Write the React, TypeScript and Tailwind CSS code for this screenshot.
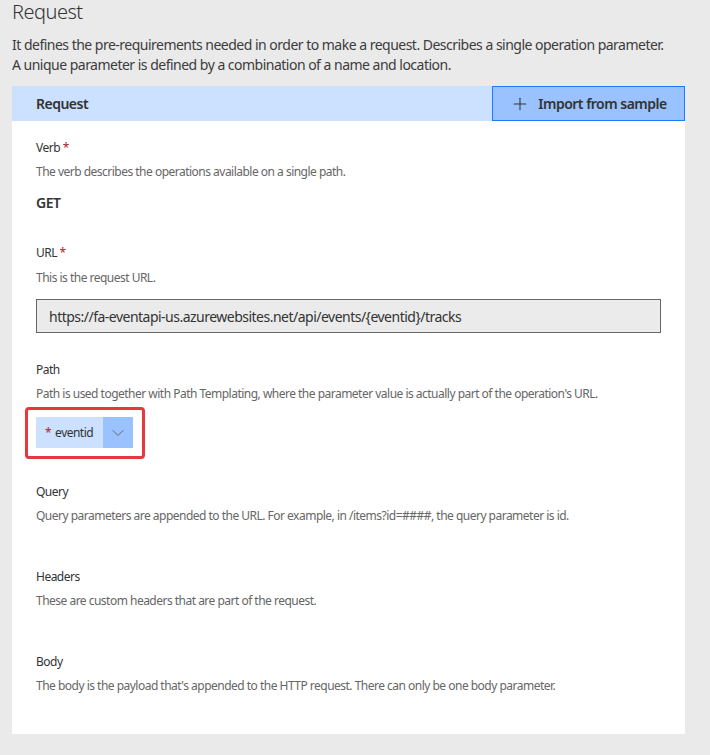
import { Plus, ChevronDown } from "lucide-react";

/**
 * Request definition panel: verb, url, path params, query, headers, body
 */
export default function App() {
  // Sections that only carry a label and a description
  const emptySections = [
    {
      label: "Query",
      description:
        "Query parameters are appended to the URL. For example, in /items?id=####, the query parameter is id.",
    },
    {
      label: "Headers",
      description: "These are custom headers that are part of the request.",
    },
    {
      label: "Body",
      description:
        "The body is the payload that's appended to the HTTP request. There can only be one body parameter.",
    },
  ];

  return (
    <div className="min-h-[755px] bg-[#eaeaea] px-3 pt-[2px] font-['Segoe_UI','Noto_Sans',sans-serif] tracking-[-0.032em] text-[#333333]">
      {/* Title */}
      <h1 className="text-[20px] font-light leading-[20px] text-[#333333]">Request</h1>
      <p className="mt-[13px] text-[14px] leading-[20px] text-[#3c3c3c]">
        It defines the pre-requirements needed in order to make a request. Describes a single operation parameter.
        <br />
        A unique parameter is defined by a combination of a name and location.
      </p>

      {/* Panel */}
      <div className="mt-[11px] w-[673px] bg-white pb-[39px]">
        <div className="flex h-[35px] items-stretch bg-[#cce0ff]">
          <div className="flex flex-1 items-center pl-6 text-[14px] font-semibold">Request</div>
          <button className="flex w-[193px] items-center justify-center gap-2 border border-[#1a7bff] bg-[#99c2ff] text-[14px] font-semibold text-[#333333]">
            <Plus className="h-5 w-5 text-[#333333]" strokeWidth={1.25} />
            Import from sample
          </button>
        </div>

        <div className="pl-6 pr-6 text-[12px]">
          {/* Verb */}
          <div className="pt-[18px]">
            <div className="leading-[18px]">
              Verb <span className="text-[#a4262c]">*</span>
            </div>
            <div className="mt-[6px] leading-[18px] text-[#666666]">
              The verb describes the operations available on a single path.
            </div>
            <div className="mt-[12px] text-[14px] font-semibold leading-[20px]">GET</div>
          </div>

          {/* URL */}
          <div className="pt-[31px]">
            <div className="leading-[18px]">
              URL <span className="text-[#a4262c]">*</span>
            </div>
            <div className="mt-[7px] leading-[18px] text-[#666666]">This is the request URL.</div>
            <div className="mt-[12px] flex h-[34px] w-[625px] items-center border border-[#666666] bg-[#ebebeb] px-3 text-[14px]">
              https://fa-eventapi-us.azurewebsites.net/api/events/{"{eventid}"}/tracks
            </div>
          </div>

          {/* Path */}
          <div className="pt-[28px]">
            <div className="leading-[18px]">Path</div>
            <div className="mt-[6px] leading-[18px] text-[#666666]">
              Path is used together with Path Templating, where the parameter value is actually part of the operation's URL.
            </div>
            <div className="-ml-[11px] mt-[4px] inline-flex rounded-[4px] border-[3px] border-[#e8383d] pb-[8px] pl-[8px] pr-[9px] pt-[7px]">
              <div className="flex h-[31px]">
                <div className="flex w-[67px] items-center bg-[#cce0ff] pl-[9px] text-[12px]">
                  <span className="mr-1 text-[#a4262c]">*</span>eventid
                </div>
                <div className="flex w-[30px] items-center justify-center bg-[#99c2ff]">
                  <ChevronDown className="h-5 w-5 text-[#555555]" strokeWidth={1} />
                </div>
              </div>
            </div>
          </div>

          {emptySections.map((section, i) => (
            <div key={section.label} className={i === 0 ? "pt-[24px]" : "pt-[43px]"}>
              <div className="leading-[18px]">{section.label}</div>
              <div className="mt-[6px] leading-[18px] text-[#666666]">{section.description}</div>
            </div>
          ))}
        </div>
      </div>
    </div>
  );
}
